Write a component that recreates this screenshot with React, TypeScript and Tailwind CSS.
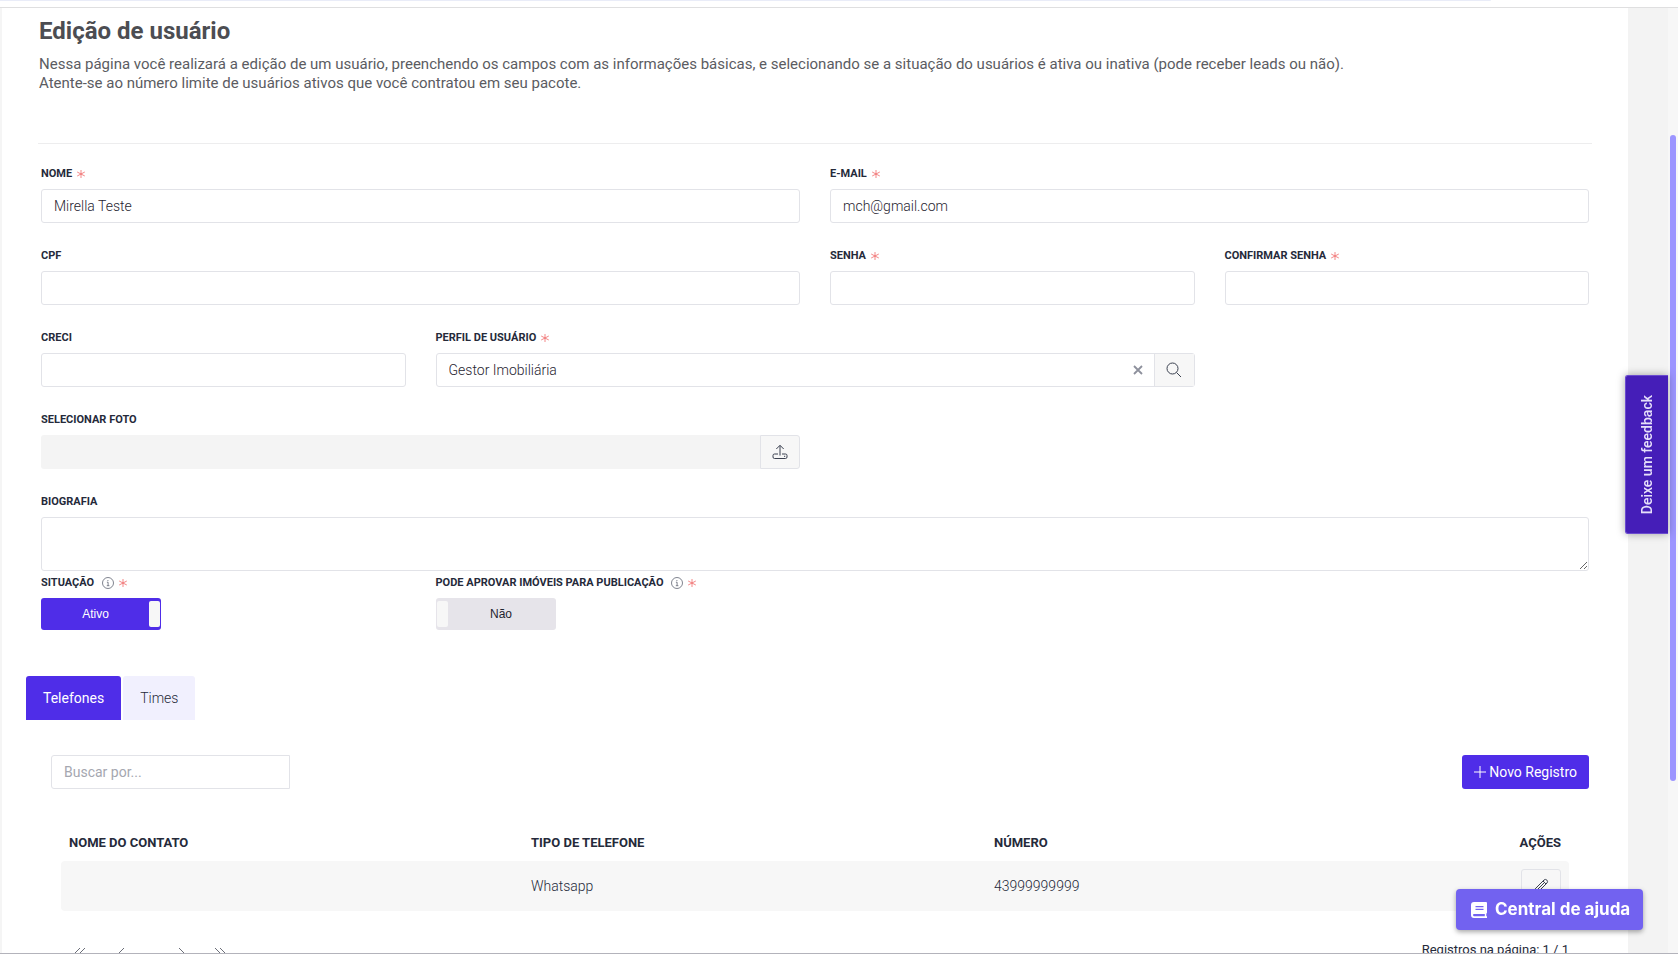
import { useState, type ReactNode } from 'react';

const inputClass =
  'h-[34px] w-full min-w-0 rounded-[3px] border border-[#e2e3e8] bg-white px-3 text-sm font-light text-[#1f2430] outline-none focus:border-[#4f2de8]';

function InfoIcon() {
  return (
    <svg className="ml-2 h-3 w-3 text-[#4b5060]" viewBox="0 0 12 12" fill="none" stroke="currentColor" strokeWidth={0.7}>
      <circle cx="6" cy="6" r="5.5" />
      <path d="M4.9 5.2H6.1V8.6M4.8 8.7H7.4M5.9 3V4" />
    </svg>
  );
}

function RequiredMark() {
  return (
    <svg className="ml-[5px] h-2 w-2 text-[#f06a6a]" viewBox="0 0 8 8" fill="none" stroke="currentColor" strokeWidth={0.8}>
      <path d="M4 0v8M0.2 2l7.6 4M7.8 2L0.2 6" />
    </svg>
  );
}

interface FieldProps {
  id: string;
  label: string;
  required?: boolean;
  info?: boolean;
  className?: string;
  children: ReactNode;
}

function Field({ id, label, required, info, className = '', children }: FieldProps) {
  return (
    <div className={className}>
      <label htmlFor={id} className="mb-[7px] flex h-4 items-center text-[11px] font-bold text-[#252a3a]">
        {label}
        {info && <InfoIcon />}
        {required && <RequiredMark />}
      </label>
      {children}
    </div>
  );
}

interface ToggleProps {
  id: string;
  on: string;
  off: string;
  initial: boolean;
}

function Toggle({ id, on, off, initial }: ToggleProps) {
  const [checked, setChecked] = useState(initial);
  return (
    <label
      className={`flex h-8 w-[120px] cursor-pointer items-center rounded-[3px] p-px font-['Liberation_Sans',sans-serif] text-xs ${
        checked ? 'bg-[#4f2de8] text-white' : 'flex-row-reverse bg-[#e6e4ea] text-[#1f2430]'
      }`}
    >
      <input id={id} type="checkbox" className="sr-only" checked={checked} onChange={() => setChecked(!checked)} />
      <span className="flex-1 text-center">{checked ? on : off}</span>
      <span className="h-[26px] w-[11px] rounded-[2px] bg-[#f7f7f7]" />
    </label>
  );
}

const phones = [{ contact: '', type: 'Whatsapp', number: '43999999999' }];

export default function App() {
  const [tab, setTab] = useState('Telefones');
  const [profile, setProfile] = useState('Gestor Imobiliária');

  return (
    <div className="flex h-screen flex-col overflow-hidden border-b border-[#b3b3bb] bg-white font-[Roboto,sans-serif] text-sm text-[#252a3a]">
      {/* Bottom edge of the top bar */}
      <header className="h-2 shrink-0 border-b border-[#dfdfe0]">
        <div className="mr-[187px] h-px rounded-br bg-[#e9ecf8]" />
      </header>

      <div className="flex min-h-0 flex-1">
        <main className="min-w-0 flex-1 overflow-hidden border-l-2 border-[#f5f5f5] pr-9 pl-6">
          <div className="pt-[7px] pl-[13px]">
            <h1 className="text-2xl leading-8 font-bold text-[#4c4d52]">Edição de usuário</h1>
            <p className="mt-2 text-[15px] leading-[19px] text-[#5b5c62]">
              Nessa página você realizará a edição de um usuário, preenchendo os campos com as informações básicas, e
              selecionando se a situação do usuários é ativa ou inativa (pode receber leads ou não).
              <br />
              Atente-se ao número limite de usuários ativos que você contratou em seu pacote.
            </p>
          </div>
          <hr className="mt-[50px] ml-3 border-[#ededee]" />

          {/* User form */}
          <form className="mt-[22px] mr-[3px] ml-[15px] grid grid-cols-4 gap-x-[30px] gap-y-[25px]">
            <Field id="nome" label="NOME" required className="col-span-2">
              <input id="nome" className={inputClass} defaultValue="Mirella Teste" />
            </Field>
            <Field id="email" label="E-MAIL" required className="col-span-2">
              <input id="email" type="email" className={inputClass} defaultValue="mch@gmail.com" />
            </Field>

            <Field id="cpf" label="CPF" className="col-span-2">
              <input id="cpf" className={inputClass} />
            </Field>
            <Field id="senha" label="SENHA" required>
              <input id="senha" type="password" className={inputClass} />
            </Field>
            <Field id="confirmar" label="CONFIRMAR SENHA" required>
              <input id="confirmar" type="password" className={inputClass} />
            </Field>

            <Field id="creci" label="CRECI">
              <input id="creci" className={inputClass} />
            </Field>
            <Field id="perfil" label="PERFIL DE USUÁRIO" required className="col-span-2">
              <div className="flex h-[34px] rounded-[3px] border border-[#e2e3e8]">
                <input
                  id="perfil"
                  className="min-w-0 flex-1 px-3 text-sm font-light text-[#1f2430] outline-none"
                  value={profile}
                  onChange={(e) => setProfile(e.target.value)}
                />
                <button type="button" aria-label="Limpar" className="flex w-8 items-center justify-center" onClick={() => setProfile('')}>
                  <svg className="h-2.5 w-2.5 text-[#8d909c]" viewBox="0 0 10 10" fill="none" stroke="currentColor" strokeWidth={1.8}>
                    <path d="M1 1l8 8M9 1L1 9" />
                  </svg>
                </button>
                <button
                  type="button"
                  aria-label="Pesquisar"
                  className="flex w-10 items-center justify-center border-l border-[#e2e3e8] bg-[#f7f7f7]"
                >
                  <svg className="h-4 w-4 text-[#3b4150]" viewBox="0 0 16 16" fill="none" stroke="currentColor" strokeWidth={1}>
                    <circle cx="6.5" cy="6.5" r="5.5" />
                    <path d="M10.5 10.5L15 15" />
                  </svg>
                </button>
              </div>
            </Field>

            <Field id="foto" label="SELECIONAR FOTO" className="col-span-2 col-start-1">
              <div className="flex">
                <input id="foto" readOnly className="h-[34px] min-w-0 flex-1 rounded-l-[3px] bg-[#f4f4f4] px-3 outline-none" />
                <button
                  type="button"
                  aria-label="Enviar foto"
                  className="flex h-[34px] w-10 items-center justify-center rounded-r-[3px] border border-[#e2e3e8] bg-[#f7f7f7]"
                >
                  <svg className="h-4 w-4 text-[#3b4150]" viewBox="0 0 16 16" fill="none" stroke="currentColor" strokeWidth={1}>
                    <path d="M8 11.5V1.5M4.3 5L8 1.3L11.7 5M6 10H2.5Q1 10 1 11.5V13Q1 14.5 2.5 14.5H13.5Q15 14.5 15 13V11.5Q15 10 13.5 10H10M12 12.3H13.2" />
                  </svg>
                </button>
              </div>
            </Field>

            <Field id="biografia" label="BIOGRAFIA" className="col-span-4">
              <textarea
                id="biografia"
                className="block h-[54px] w-full rounded-[3px] border border-[#e2e3e8] px-3 py-2 text-sm font-light outline-none"
              />
            </Field>

            <Field id="situacao" label="SITUAÇÃO" info required className="-mt-[21px]">
              <Toggle id="situacao" on="Ativo" off="Inativo" initial />
            </Field>
            <Field id="aprovar" label="PODE APROVAR IMÓVEIS PARA PUBLICAÇÃO" info required className="col-span-2 -mt-[21px]">
              <Toggle id="aprovar" on="Sim" off="Não" initial={false} />
            </Field>
          </form>

          {/* Tabs */}
          <div className="mt-[46px] flex gap-0.5">
            {['Telefones', 'Times'].map((name) => (
              <button
                key={name}
                type="button"
                onClick={() => setTab(name)}
                className={`h-11 rounded-t-[3px] px-[17px] ${
                  tab === name ? 'bg-[#4f2de8] text-white' : 'bg-[#f1f0fe] font-light text-[#252a3a]'
                }`}
              >
                {name}
              </button>
            ))}
          </div>

          <div className="mt-[35px] mr-[3px] ml-[25px] flex items-center justify-between">
            <input
              type="search"
              aria-label="Buscar"
              placeholder="Buscar por..."
              className="h-[34px] w-[239px] rounded-l-[3px] border border-[#e2e3e8] px-3 text-sm outline-none placeholder:text-[#a5a7b0]"
            />
            <button type="button" className="flex h-[34px] items-center gap-[3px] rounded-[3px] bg-[#4f2de8] px-3 text-white">
              <svg className="h-3 w-3" viewBox="0 0 12 12" fill="none" stroke="currentColor">
                <path d="M6 0v12M0 6h12" />
              </svg>
              Novo Registro
            </button>
          </div>

          {/* Phones table */}
          <div className="mt-[34px] mr-[23px] ml-[35px]">
            <table className="w-full table-fixed text-left font-light">
              <thead>
                <tr className="h-[38px] text-[13px] font-bold">
                  <th className="w-[462px] px-2 pt-0.5">NOME DO CONTATO</th>
                  <th className="w-[463px] px-2 pt-0.5">TIPO DE TELEFONE</th>
                  <th className="px-2 pt-0.5">NÚMERO</th>
                  <th className="w-24 px-2 pt-0.5 text-right">AÇÕES</th>
                </tr>
              </thead>
              <tbody>
                {phones.map((phone) => (
                  <tr key={phone.number} className="h-[50px] bg-[#f7f7f7]">
                    <td className="rounded-l-[4px] px-2">{phone.contact}</td>
                    <td className="px-2">{phone.type}</td>
                    <td className="px-2">{phone.number}</td>
                    <td className="rounded-r-[4px] px-2">
                      <button
                        type="button"
                        aria-label="Editar"
                        className="ml-auto flex h-[34px] w-10 items-center justify-center rounded-[3px] border border-[#e2e3e8]"
                      >
                        <svg className="h-4 w-4 text-[#3b4150]" viewBox="0 0 16 16" fill="none" stroke="currentColor" strokeWidth={1}>
                          <path d="M1.5 14.5L2.5 10.5L11 2Q12.5 0.8 13.9 2.1Q15.2 3.5 14 5L5.5 13.5ZM10 3L13 6M4 12L11.5 4.5M2.5 10.5L5.5 13.5" />
                        </svg>
                      </button>
                    </td>
                  </tr>
                ))}
              </tbody>
            </table>
            <div className="flex items-start justify-between pt-[30px]">
              <nav aria-label="Paginação" className="flex w-[165px] justify-between pt-[6px] pl-3 text-[#6b6e78]">
                {[
                  ['Primeira', 'M7 1L2 6L7 11M12 1L7 6L12 11'],
                  ['Anterior', 'M9 1L4 6L9 11'],
                  ['Próxima', 'M7 1L12 6L7 11'],
                  ['Última', 'M1 1L6 6L1 11M6 1L11 6L6 11'],
                ].map(([name, path]) => (
                  <button key={name} type="button" aria-label={name} className={name === 'Anterior' ? 'mr-4' : ''}>
                    <svg className="h-3 w-3" viewBox="0 0 12 12" fill="none" stroke="currentColor">
                      <path d={path} />
                    </svg>
                  </button>
                ))}
              </nav>
              <p className="text-[13px]">Registros na página: 1 / 1</p>
            </div>
          </div>
        </main>

        {/* Scroll track */}
        <aside className="flex w-[50px] shrink-0 justify-end bg-[#f3f3f3]">
          <div className="w-2.5 bg-[#f7f7f7] px-0.5 pt-[127px]">
            <div className="h-[79%] rounded-full bg-[#9c95ff]" />
          </div>
        </aside>
      </div>

      <button
        type="button"
        className="fixed top-[375px] right-2.5 flex h-[159px] w-[43px] items-center justify-center rounded-l-[3px] border border-r-0 border-[#6b4bd0] bg-[#451eb8] text-[#e6dffa] shadow-[0_0_8px_rgba(0,0,0,0.35)]"
      >
        <span className="rotate-180 text-sm font-medium [writing-mode:vertical-rl]">Deixe um feedback</span>
      </button>

      <button
        type="button"
        className="fixed right-[35px] bottom-6 flex h-[41px] w-[187px] items-center gap-2 rounded-[4px] bg-[#7262f0] pl-[15px] font-[Inter,sans-serif] text-[17px] font-bold whitespace-nowrap text-white shadow-[0_2px_5px_rgba(0,0,0,0.35)]"
      >
        <svg className="h-4 w-4 shrink-0" viewBox="0 0 16 16" fill="currentColor">
          <path
            fillRule="evenodd"
            d="M3 0H15Q16 0 16 1V10.5Q16 11.3 15.3 11.6V14.3H16V16H3Q0 16 0 13V3Q0 0 3 0ZM4.5 4V5.2H12.5V4ZM4.5 6.8V8H12.5V6.8ZM3 12Q2 12 2 13.1Q2 14.2 3 14.2H13.8V12Z"
          />
        </svg>
        Central de ajuda
      </button>
    </div>
  );
}
